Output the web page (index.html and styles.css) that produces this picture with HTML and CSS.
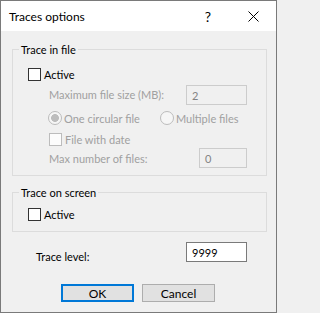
FILE: index.html
```html
<!DOCTYPE html>
<html>
<head>
<meta charset="utf-8">
<link rel="stylesheet" href="styles.css">
</head>
<body>
<div class="window">
  <div class="titlebar">
    <span class="title">Traces options</span>
    <span class="help">?</span>
    <span class="close"><svg width="11" height="11" viewBox="0 0 11 11"><path d="M0.5 0.5 L10.5 10.5 M10.5 0.5 L0.5 10.5" stroke="#000" stroke-width="1" fill="none"/></svg></span>
  </div>
  <div class="client">
    <fieldset class="group g1">
      <legend>Trace in file</legend>
      <div class="row row-active"><span class="cb"></span><span class="txt">Active</span></div>
      <div class="row row-size"><span class="dis">Maximum file size (MB):</span><span class="input dis-input w61">2</span></div>
      <div class="row row-radio">
        <span class="radio-opt"><span class="radio checked"></span><span class="dis">One circular file</span></span>
        <span class="radio-opt"><span class="radio"></span><span class="dis">Multiple files</span></span>
      </div>
      <div class="row row-date"><span class="cb dis-cb"></span><span class="dis">File with date</span></div>
      <div class="row row-count"><span class="dis">Max number of files:</span><span class="input dis-input w48">0</span></div>
    </fieldset>
    <fieldset class="group g2">
      <legend>Trace on screen</legend>
      <div class="row row-active2"><span class="cb"></span><span class="txt">Active</span></div>
    </fieldset>
    <div class="row row-level"><span class="level-label">Trace level:</span><span class="input w61">9999</span></div>
    <div class="buttons">
      <span class="btn default">OK</span>
      <span class="btn">Cancel</span>
    </div>
  </div>
</div>
</body>
</html>
```

FILE: styles.css
```css
* { box-sizing: border-box; }
html, body { margin: 0; padding: 0; background: #f0f0f0; }
body { font-family: Lato, "Noto Sans", sans-serif; font-size: 11px; color: #000; }

.window {
  width: 277px;
  height: 313px;
  border: 1px solid #7a7a7a;
  display: flex;
  flex-direction: column;
  background: #f0f0f0;
}

.titlebar {
  height: 30px;
  background: #fff;
  display: flex;
  align-items: center;
  flex: none;
}
.title {
  flex: 1;
  padding-left: 8px;
  padding-top: 1px;
  font-size: 12px;
}
.help {
  width: 44px;
  text-align: center;
  font-size: 14px;
  padding-top: 1px;
}
.close {
  width: 46px;
  height: 30px;
  display: flex;
  align-items: center;
  justify-content: center;
}
.close svg { display: block; }

.client {
  flex: 1;
  padding: 11px 9px 0 11px;
}

.group {
  margin: 0;
  padding: 0;
  border: 1px solid #dcdcdc;
  min-width: 0;
}
.group legend {
  padding: 0 2px;
  margin-left: 6px;
  line-height: 15px;
}
.g1 { padding-bottom: 7px; }
.g2 { margin-top: 9px; padding-bottom: 7px; }

.row {
  display: flex;
  align-items: center;
}
.row-active { margin-top: 7px; height: 20px; padding-left: 15px; }
.row-active2 { margin-top: 4px; height: 20px; padding-left: 15px; }
.row-size {
  height: 21px;
  padding-left: 36px;
  padding-right: 19px;
  justify-content: space-between;
}
.row-size .input { align-self: flex-end; }
.row-radio { height: 26px; padding-left: 35px; }
.row-date { height: 17px; padding-left: 36px; }
.row-count {
  height: 20px;
  padding-left: 36px;
  padding-right: 19px;
  justify-content: space-between;
}

.cb {
  width: 13px;
  height: 13px;
  border: 1px solid #333;
  background: #fff;
  margin-right: 3px;
  flex: none;
}
.dis-cb {
  border-color: #bcbcbc;
  background: #fcfcfc;
}

.radio-opt { display: flex; align-items: center; }
.radio-opt:first-child { width: 112px; }
.radio {
  width: 14px;
  height: 14px;
  border-radius: 50%;
  border: 1px solid #bcbcbc;
  background: #f6f6f6;
  margin-right: 2px;
  flex: none;
}
.radio.checked {
  background: radial-gradient(circle, #bdbdbd 0 3.6px, #f6f6f6 4.2px);
}

.dis { color: #a0a0a0; }

.input {
  height: 20px;
  border: 1px solid #7a7a7a;
  background: #fff;
  padding-left: 5px;
  display: flex;
  align-items: center;
}
.dis-input {
  border-color: #cccccc;
  background: #f0f0f0;
  color: #838383;
}
.w61 { width: 61px; }
.w48 { width: 48px; }

.row-level {
  margin-top: 10px;
  height: 20px;
  padding-left: 24px;
  padding-right: 20px;
  justify-content: space-between;
}
.level-label { padding-top: 8px; }

.buttons {
  display: flex;
  gap: 8px;
  margin-top: 22px;
  padding-left: 49px;
}
.btn {
  width: 73px;
  height: 18px;
  background: #e1e1e1;
  border: 1px solid #adadad;
  display: flex;
  align-items: center;
  justify-content: center;
  font-size: 12px;
}
.btn.default {
  border: 2px solid #0078d7;
}
```
